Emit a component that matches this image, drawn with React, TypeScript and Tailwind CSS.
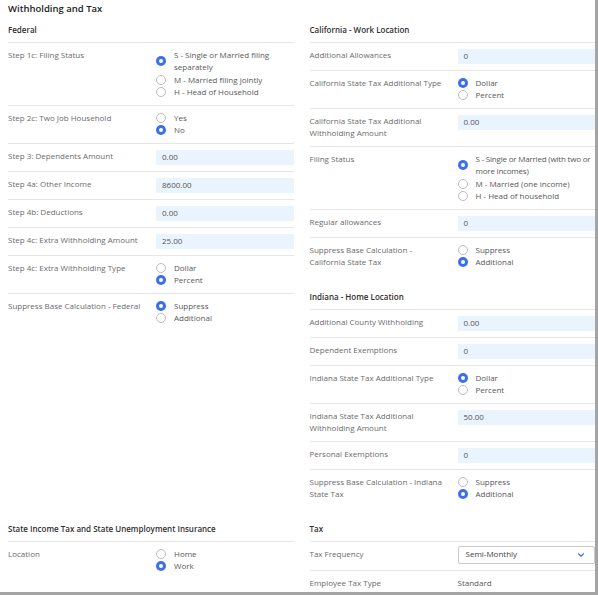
import { ChevronDown } from 'lucide-react'
import type { ReactNode } from 'react'

type Opt = { label: ReactNode; checked?: boolean }

function Radio({ checked }: { checked?: boolean }) {
  if (checked) {
    return (
      <span className="flex size-[10px] shrink-0 items-center justify-center rounded-full bg-[#3c6ef0]">
        <span className="size-[4px] rounded-full bg-white" />
      </span>
    )
  }
  return <span className="size-[10px] shrink-0 rounded-full border border-[#bdbdbd] bg-white" />
}

function Options({ options }: { options: Opt[] }) {
  return (
    <div className="flex flex-col">
      {options.map((o, i) => (
        <div key={i} className="flex items-center gap-[8px] text-[#585858]">
          <Radio checked={o.checked} />
          <span className="whitespace-nowrap">{o.label}</span>
        </div>
      ))}
    </div>
  )
}

function Input({ value }: { value: string }) {
  return (
    <div className="flex h-[15px] items-center bg-[#eaf4fe] px-[6px] text-[#555]">{value}</div>
  )
}

function Row({ label, children }: { label: ReactNode; children: ReactNode }) {
  return (
    <div className="grid grid-cols-[148px_1fr] border-t border-[#e6e6e6] pt-[6px] pb-[6px]">
      <div className="pr-2 text-[#6b6b6b]">{label}</div>
      <div>{children}</div>
    </div>
  )
}

function Section({ title, children, className = '' }: { title: string; children: ReactNode; className?: string }) {
  return (
    <div className={className}>
      <h3 className="pb-[5.5px] font-semibold text-[#2f2f2f]">{title}</h3>
      {children}
    </div>
  )
}

export default function App() {
  return (
    <div className="min-h-screen bg-[#a4a4a4]">
      <div
        className="h-[592px] w-[595px] overflow-hidden bg-white pl-[8px] text-[8px] leading-[12.5px]"
        style={{ fontFamily: '"Open Sans", "Liberation Sans", sans-serif' }}
      >
        <h1 className="pt-[0.5px] text-[9.5px] leading-[15px] font-semibold text-[#222]">Withholding and Tax</h1>
        <div className="mt-[8px] grid grid-cols-2 gap-x-4 gap-y-4">
          <Section title="Federal">
            <Row label="Step 1c: Filing Status">
              <div className="flex flex-col text-[#585858]">
                <div className="flex items-center gap-[8px]">
                  <Radio checked />
                  <span className="whitespace-nowrap">
                    S - Single or Married filing
                    <br />
                    separately
                  </span>
                </div>
                <Options
                  options={[{ label: 'M - Married filing jointly' }, { label: 'H - Head of Household' }]}
                />
              </div>
            </Row>
            <Row label="Step 2c: Two Job Household">
              <Options options={[{ label: 'Yes' }, { label: 'No', checked: true }]} />
            </Row>
            <Row label="Step 3: Dependents Amount">
              <Input value="0.00" />
            </Row>
            <Row label="Step 4a: Other Income">
              <Input value="8600.00" />
            </Row>
            <Row label="Step 4b: Deductions">
              <Input value="0.00" />
            </Row>
            <Row label="Step 4c: Extra Withholding Amount">
              <Input value="25.00" />
            </Row>
            <Row label="Step 4c: Extra Withholding Type">
              <Options options={[{ label: 'Dollar' }, { label: 'Percent', checked: true }]} />
            </Row>
            <Row label="Suppress Base Calculation - Federal">
              <Options options={[{ label: 'Suppress', checked: true }, { label: 'Additional' }]} />
            </Row>
          </Section>

          <div>
            <Section title="California - Work Location">
              <Row label="Additional Allowances">
                <Input value="0" />
              </Row>
              <Row label="California State Tax Additional Type">
                <Options options={[{ label: 'Dollar', checked: true }, { label: 'Percent' }]} />
              </Row>
              <Row label={<>California State Tax Additional<br />Withholding Amount</>}>
                <Input value="0.00" />
              </Row>
              <Row label="Filing Status">
                <div className="flex flex-col text-[#585858]">
                  <div className="flex items-center gap-[8px]">
                    <Radio checked />
                    <span className="whitespace-nowrap tracking-[-0.2px]">
                      S - Single or Married (with two or
                      <br />
                      more incomes)
                    </span>
                  </div>
                  <Options
                    options={[{ label: 'M - Married (one income)' }, { label: 'H - Head of household' }]}
                  />
                </div>
              </Row>
              <Row label="Regular allowances">
                <Input value="0" />
              </Row>
              <Row label={<>Suppress Base Calculation -<br />California State Tax</>}>
                <Options options={[{ label: 'Suppress' }, { label: 'Additional', checked: true }]} />
              </Row>
            </Section>

            <Section title="Indiana - Home Location" className="mt-4">
              <Row label="Additional County Withholding">
                <Input value="0.00" />
              </Row>
              <Row label="Dependent Exemptions">
                <Input value="0" />
              </Row>
              <Row label="Indiana State Tax Additional Type">
                <Options options={[{ label: 'Dollar', checked: true }, { label: 'Percent' }]} />
              </Row>
              <Row label={<>Indiana State Tax Additional<br />Withholding Amount</>}>
                <Input value="50.00" />
              </Row>
              <Row label="Personal Exemptions">
                <Input value="0" />
              </Row>
              <Row label={<>Suppress Base Calculation - Indiana<br />State Tax</>}>
                <Options options={[{ label: 'Suppress' }, { label: 'Additional', checked: true }]} />
              </Row>
            </Section>
          </div>

          <Section title="State Income Tax and State Unemployment Insurance">
            <Row label="Location">
              <Options options={[{ label: 'Home' }, { label: 'Work', checked: true }]} />
            </Row>
          </Section>

          <Section title="Tax">
            <Row label="Tax Frequency">
              <div className="-mt-[2px] flex h-[18px] items-center justify-between rounded-[2px] border border-[#cacaca] pr-[8px] pl-[7px] text-[#444]">
                <span>Semi-Monthly</span>
                <ChevronDown className="size-[10px] text-[#3c6ef0]" strokeWidth={2.6} />
              </div>
            </Row>
            <Row label="Employee Tax Type">
              <span className="text-[#555]">Standard</span>
            </Row>
          </Section>
        </div>
      </div>
    </div>
  )
}
